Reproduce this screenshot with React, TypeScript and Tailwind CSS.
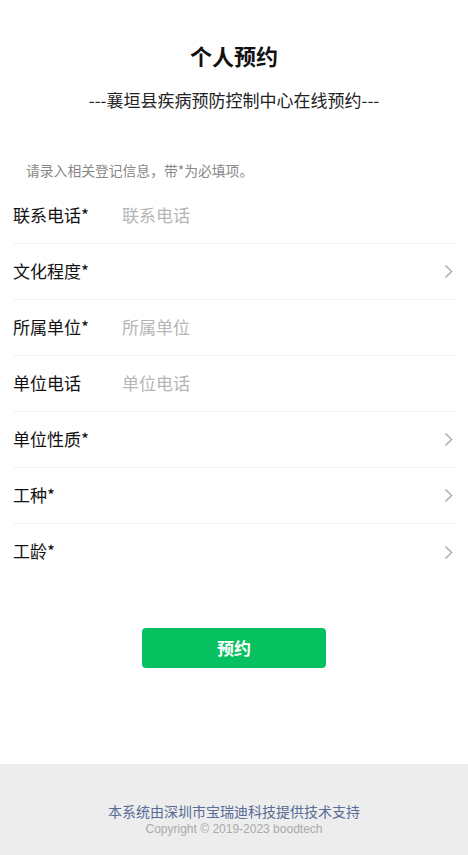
import React from "react";

const rows = [
  { label: "联系电话*", placeholder: "联系电话" },
  { label: "文化程度*", select: true },
  { label: "所属单位*", placeholder: "所属单位" },
  { label: "单位电话", placeholder: "单位电话" },
  { label: "单位性质*", select: true },
  { label: "工种*", select: true },
  { label: "工龄*", select: true, last: true },
];

function Chevron() {
  return (
    <svg width="9" height="15" viewBox="0 0 9 15" fill="none">
      <path d="M1.5 1.5 L7.5 7.5 L1.5 13.5" stroke="#b2b2b2" strokeWidth="1.6" />
    </svg>
  );
}

export default function App() {
  return (
    <div
      className="w-[468px] h-[855px] bg-white flex flex-col"
      style={{ fontFamily: '"Noto Sans CJK SC", "Noto Sans", sans-serif' }}
    >
      <div className="flex-1 flex flex-col">
        <h1 className="mt-[41px] h-[28px] leading-[28px] text-center text-[22px] font-bold text-[#111]">
          个人预约
        </h1>
        <p className="mt-[19px] h-[24px] leading-[24px] text-center text-[17px] text-[#222]">
          ---襄垣县疾病预防控制中心在线预约---
        </p>
        <p className="mt-[49px] h-[18px] leading-[18px] pl-[26px] text-[13.8px] text-[#888]">
          请录入相关登记信息，带*为必填项。
        </p>
        <div className="mt-[9px] px-[13px]">
          {rows.map((r) => (
            <div
              key={r.label}
              className={
                "h-[56px] pb-[2px] flex items-center " +
                (r.last ? "" : "border-b border-[#f2f2f2]")
              }
            >
              <span className="w-[109px] text-[17px] text-[#111]">{r.label}</span>
              <span className="flex-1 text-[17px] text-[#b5b5b5]">{r.placeholder ?? ""}</span>
              {r.select && (
                <span className="mr-[2px] mt-[2px]">
                  <Chevron />
                </span>
              )}
            </div>
          ))}
        </div>
        <div className="mt-[48px] flex justify-center">
          <button className="w-[184px] h-[40px] rounded-[4px] bg-[#07c160] text-white text-[17px] font-bold">
            预约
          </button>
        </div>
      </div>
      <div className="h-[91px] bg-[#ededed] flex flex-col items-center pt-[38px]">
        <p className="text-[14px] leading-[18px] text-[#576b95]">本系统由深圳市宝瑞迪科技提供技术支持</p>
        <p
          className="text-[12px] leading-[18px] text-[#aaa]"
          style={{ fontFamily: '"Liberation Sans", Arial, sans-serif' }}
        >
          Copyright © 2019-2023 boodtech
        </p>
      </div>
    </div>
  );
}
